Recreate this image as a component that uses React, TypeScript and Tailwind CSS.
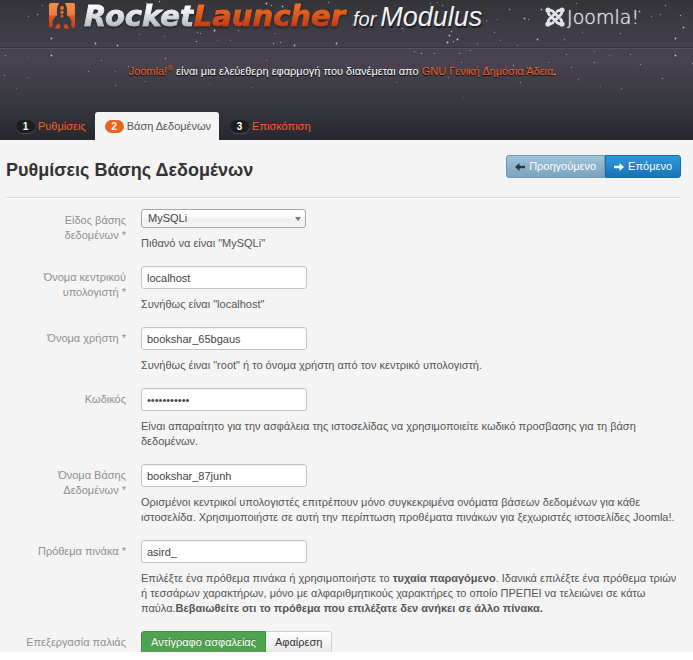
import React from 'react';
import clsx from 'clsx';

const STARS = [
  [28, 16, 0.5], [37, 14, 0.7], [42, 5, 0.5], [51, 38, 0.8], [95, 43, 0.8], [117, 45, 0.8], [139, 34, 0.4], [146, 3, 0.6],
  [164, 36, 0.4], [159, 1, 0.7], [197, 32, 0.6], [200, 33, 0.5], [196, 41, 0.7], [214, 30, 0.9], [217, 40, 0.3], [230, 40, 0.4],
  [238, 30, 0.5], [266, 3, 0.9], [271, 5, 0.7], [282, 6, 0.8], [273, 43, 0.7], [280, 42, 0.6], [275, 33, 0.4], [294, 45, 0.8],
  [328, 2, 0.6], [336, 43, 0.8], [352, 24, 0.4], [402, 28, 0.5], [430, 3, 0.5], [437, 2, 0.4], [442, 5, 0.6], [447, 42, 0.9],
  [449, 35, 0.8], [451, 31, 0.7], [457, 39, 1], [453, 41, 0.7], [477, 43, 0.5], [486, 20, 0.5], [494, 32, 0.5], [497, 19, 0.4],
  [500, 40, 0.4], [509, 9, 0.7], [517, 45, 0.4], [524, 18, 0.8], [528, 19, 0.6], [537, 39, 0.8], [541, 9, 0.8], [564, 39, 0.5],
  [576, 3, 0.5], [582, 32, 0.4], [620, 33, 0.6], [639, 11, 0.8], [651, 16, 0.5], [660, 14, 0.5], [665, 5, 0.6], [675, 38, 0.9],
  [680, 15, 0.7], [683, 27, 0.8], [5, 55, 0.5], [27, 57, 0.3], [51, 55, 0.9], [4, 75, 0.5], [28, 77, 0.4], [88, 71, 0.5],
  [101, 60, 0.5], [115, 71, 0.4], [165, 58, 0.7], [128, 66, 0.5], [115, 85, 0.5], [145, 81, 0.4], [209, 84, 0.3], [266, 60, 0.4],
  [251, 87, 0.3], [414, 51, 0.5], [421, 53, 0.7], [434, 53, 0.5], [459, 53, 0.5], [470, 50, 0.5], [487, 67, 0.5], [461, 62, 0.5],
  [513, 65, 0.6], [520, 82, 0.5], [566, 54, 0.5], [594, 51, 0.3], [571, 67, 0.5], [594, 62, 0.6], [609, 55, 0.3], [630, 54, 0.5],
  [640, 64, 0.5], [675, 55, 0.9], [692, 63, 0.6], [662, 78, 0.5], [621, 88, 0.4], [600, 86, 0.3], [448, 77, 0.4], [396, 82, 0.4],
  [16, 88, 0.3], [463, 97, 0.2], [578, 79, 0.4], [548, 62, 0.4],
];

const STEPS = ['Ρυθμίσεις', 'Βάση Δεδομένων', 'Επισκόπιση'];

function Stars() {
  return (
    <svg className="absolute inset-0 w-full h-full pointer-events-none" aria-hidden="true">
      {STARS.map(([x, y, o], i) => (
        <circle key={i} cx={x + 0.5} cy={y + 0.5} r={o > 0.7 ? 0.9 : 0.7} fill="#d5d8dd" opacity={o} />
      ))}
    </svg>
  );
}

function RocketIcon() {
  return (
    <svg width="28" height="28" viewBox="0 0 28 28" aria-hidden="true">
      <defs>
        <linearGradient id="rocket" x1="0" y1="0" x2="0" y2="1">
          <stop offset="0" stopColor="#f47a1f" />
          <stop offset="0.5" stopColor="#e25d1d" />
          <stop offset="1" stopColor="#c23c18" />
        </linearGradient>
      </defs>
      <path
        fill="url(#rocket)"
        d="M3 1h8C9 4 8.500 8 9.200 13.500 6.500 15 5 17 4.600 20L4.800 24 3 26.500 1 24V3q0-2 2-2zM17 1h8q2 0 2 2v21l-2 2.500L23.200 24l.2-4C23 17 21.500 15 18.800 13.500 19.500 8 19 4 17 1z"
      />
      <path fill="#fff" opacity="0.18" d="M3 1h8C9 4 8.500 8 9 12.500Q5 14 1 13V3q0-2 2-2zM17 1h8q2 0 2 2v10q-4 1-8-.5C19.500 8 19 4 17 1z" />
      <circle cx="14" cy="6" r="1.900" fill="#ef701e" />
      <circle cx="14" cy="10.300" r="1.700" fill="#ef701e" />
      <circle cx="14" cy="14.200" r="1.400" fill="#e25d1d" />
      <path fill="#d24a1b" d="M10 21.500l2.500 2-1 3.500-2-.5-2.500.5 1-3zM18 21.500l-2.500 2 1 3.500 2-.5 2.500.5-1-3z" />
    </svg>
  );
}

function JoomlaIcon() {
  return (
    <svg width="20" height="20" viewBox="0 0 20 20" fill="none" aria-hidden="true">
      <g stroke="#dfe4e6" strokeWidth="2.800" strokeLinecap="round" strokeLinejoin="round">
        <path d="M4.500 8C3 6.500 3 5 3.500 3.500 5 3 6.500 3 8 4.500l5.500 5.500" />
        <path d="M12 4.500C13.500 3 15 3 16.500 3.500 17 5 17 6.500 15.500 8L10 13.500" />
        <path d="M15.500 12C17 13.500 17 15 16.500 16.500 15 17 13.500 17 12 15.500L6.500 10" />
        <path d="M8 15.500C6.500 17 5 17 3.500 16.500 3 15 3 13.500 4.500 12L10 6.500" />
      </g>
      <g fill="#dfe4e6">
        <circle cx="3" cy="3" r="2.600" />
        <circle cx="17" cy="3" r="2.600" />
        <circle cx="3" cy="17" r="2.600" />
        <circle cx="17" cy="17" r="2.600" />
      </g>
    </svg>
  );
}

function Arrow({ flip, color }: { flip?: boolean; color: string }) {
  return (
    <svg width="10" height="8" viewBox="0 0 10 8" className={clsx('shrink-0', flip && 'rotate-180')} aria-hidden="true">
      <path fill={color} d="M5.500 0L10 4 5.500 8V5.300H0V2.700h5.500z" />
    </svg>
  );
}

interface RowProps {
  id: string;
  label: string;
  help?: React.ReactNode;
  children: React.ReactNode;
}

function Row({ id, label, help, children }: RowProps) {
  return (
    <div className="flex gap-[15px] pb-[15px]">
      <label htmlFor={id} className="w-[120px] shrink-0 pt-1 pl-3 text-right text-[#8f8f8f]">
        {label}
      </label>
      <div className="flex-1 min-w-0">
        {children}
        {help && <p className="mt-2">{help}</p>}
      </div>
    </div>
  );
}

function TextBox({ id, value, type = 'text' }: { id: string; value: string; type?: string }) {
  return (
    <input
      id={id}
      type={type}
      defaultValue={value}
      className="block w-[166px] h-[23px] px-[5px] bg-white border border-[#c4c4c4] rounded-[3px] text-[#444] shadow-[inset_0_1px_1px_rgba(0,0,0,0.06)]"
    />
  );
}

export default function App() {
  return (
    <div className="font-['Liberation_Sans',Arial,sans-serif] text-[11px] leading-[15px] text-[#555] bg-white">
      <div className="h-[calc(100vh-8px)] overflow-hidden bg-[#f4f4f4]">
        <header className="relative bg-[linear-gradient(#343438,#46414e_50px,#48434f_62px,#37373e_105px,#27282d)]">
          <Stars />
          <div className="relative h-[49px] pl-12 pr-[54px] flex items-start border-b border-[#57525f] shadow-[inset_0_-1px_0_#37323f]">
            <div className="mt-[2px]">
              <RocketIcon />
            </div>
            <div className="ml-2 flex items-baseline whitespace-nowrap">
              <span className="font-['DejaVu_Sans'] font-bold italic text-[29px] leading-8 drop-shadow-[0_1px_1px_#1b1b1f] [-webkit-text-stroke:1px_transparent]">
                <span className="text-transparent bg-clip-text bg-[linear-gradient(#ffffff_20%,#aeb6ba_85%)]">Rocket</span>
                <span className="text-transparent bg-clip-text bg-[linear-gradient(#f06f1e_20%,#c23c18_80%)] pr-1">Launcher</span>
              </span>
              <span className="ml-1 italic text-[#eef1f3] text-shadow-[1px_2px_1px_#1b1b1f] text-[20px] leading-8">for</span>
              <span className="ml-1 italic text-[#eef1f3] text-shadow-[1px_2px_1px_#1b1b1f] text-[27px] leading-8">Modulus</span>
            </div>
            <div className="ml-auto mt-[7px] flex items-center gap-[2px]">
              <JoomlaIcon />
              <span className="font-['DejaVu_Sans'] font-extralight text-[19px] leading-5 text-[#e2e6e8] text-shadow-[0_0_1px_#d5d9dc]">
                Joomla!
              </span>
            </div>
          </div>
          <p className="relative h-[63px] pt-[15px] pr-2 text-center text-white text-shadow-[0_1px_1px_#000]">
            <a href="#joomla" className="text-[#f2602a]">Joomla!<sup className="text-[8px]">®</sup></a> είναι μια ελεύεθερη
            εφαρμογή που διανέμεται απο <a href="#license" className="text-[#f2602a]">GNU Γενική Δημόσια Άδεια</a>.
          </p>
          <nav className="relative flex gap-px px-[6px]">
            {STEPS.map((step, i) => (
              <a
                key={step}
                href={`#step-${i + 1}`}
                className={clsx(
                  'flex items-center gap-[3px] h-7 pl-[10px] pr-2 rounded-t-[3px]',
                  i === 1 ? 'bg-[#f4f4f4] text-[#555]' : 'text-[#f2602a]'
                )}
              >
                <span
                  className={clsx(
                    'w-[19px] h-[13px] rounded-full text-center text-[10px] leading-[13px] font-bold text-white',
                    i === 1 ? 'bg-[#e8641f]' : 'bg-[#1d1d1f] shadow-[0_1px_0_#4a4a4e]'
                  )}
                >
                  {i + 1}
                </span>
                {step}
              </a>
            ))}
          </nav>
        </header>

        <main className="pl-[6px] pr-3">
          <div className="flex items-start justify-between pt-[15px] pb-3 border-b border-[#dcdcdc] shadow-[0_1px_0_#fff]">
            <h1 className="text-[18px] leading-[30px] font-bold text-[#333]">Ρυθμίσεις Βάσης Δεδομένων</h1>
            <div className="flex h-[23px] text-white text-shadow-[0_-1px_0_rgba(0,0,0,0.25)]">
              <button className="flex items-center gap-1 px-2 rounded-l-[3px] border border-[#7297ae] bg-linear-to-b from-[#9fc4da] to-[#7ba2bd]">
                <Arrow flip color="#333" />
                Προηγούμενο
              </button>
              <button className="flex items-center gap-1 px-2 rounded-r-[3px] border border-[#1a6ba8] bg-linear-to-b from-[#2a9ae0] to-[#1b72b4]">
                <Arrow color="#fff" />
                Επόμενο
              </button>
            </div>
          </div>

          <form className="pt-[11px]">
            <Row id="db-type" label="Είδος βάσης δεδομένων *" help={'Πιθανό να είναι "MySQLi"'}>
              <div className="relative w-[165px]">
                <select
                  id="db-type"
                  className="block appearance-none w-full h-[19px] pl-[6px] rounded-[3px] border border-[#a5a5a5] bg-[linear-gradient(#fff_20%,#f6f6f6_50%,#eee_52%,#f4f4f4)] text-[#444]"
                >
                  <option>MySQLi</option>
                </select>
                <svg width="6" height="4" viewBox="0 0 6 4" className="absolute right-[5px] top-2 pointer-events-none" aria-hidden="true">
                  <path d="M0 0h6L3 4z" fill="#777" />
                </svg>
              </div>
            </Row>
            <Row id="db-host" label="Όνομα κεντρικού υπολογιστή *" help={'Συνήθως είναι "localhost"'}>
              <TextBox id="db-host" value="localhost" />
            </Row>
            <Row id="db-user" label="Όνομα χρήστη *" help={'Συνήθως έιναι "root" ή το όνομα χρήστη από τον κεντρικό υπολογιστή.'}>
              <TextBox id="db-user" value="bookshar_65bgaus" />
            </Row>
            <Row
              id="db-pass"
              label="Κωδικός"
              help="Είναι απαραίτητο για την ασφάλεια της ιστοσελίδας να χρησιμοποιείτε κωδικό προσβασης για τη βάση δεδομένων."
            >
              <TextBox id="db-pass" type="password" value="secretpass1" />
            </Row>
            <Row
              id="db-name"
              label="Όνομα Βάσης Δεδομένων *"
              help="Ορισμένοι κεντρικοί υπολογιστές επιτρέπουν μόνο συγκεκριμένα ονόματα βάσεων δεδομένων για κάθε ιστοσελίδα. Χρησιμοποιήστε σε αυτή την περίπτωση προθέματα πινάκων για ξεχωριστές ιστοσελίδες Joomla!."
            >
              <TextBox id="db-name" value="bookshar_87junh" />
            </Row>
            <Row
              id="db-prefix"
              label="Πρόθεμα πινάκα *"
              help={
                <>
                  Επιλέξτε ένα πρόθεμα πινάκα ή χρησιμοποιήστε το <strong>τυχαία παραγόμενο</strong>. Ιδανικά επιλέξτε ένα πρόθεμα
                  τριών ή τεσσάρων χαρακτήρων, μόνο με αλφαριθμητικούς χαρακτήρες το οποίο ΠΡΕΠΕΙ να τελειώνει σε κάτω παύλα.
                  <strong>Βεβαιωθείτε οτι το πρόθεμα που επιλέξατε δεν ανήκει σε άλλο πίνακα.</strong>
                </>
              }
            >
              <TextBox id="db-prefix" value="asird_" />
            </Row>
            <Row id="db-backup" label="Επεξεργασία παλιάς Βάσης Δεδομένων *">
              <div className="flex h-[23px]">
                <button
                  id="db-backup"
                  type="button"
                  className="px-[9px] rounded-l-[3px] border border-[#3f8f3f] bg-[#4fa34f] text-white text-shadow-[0_-1px_0_rgba(0,0,0,0.25)]"
                >
                  Αντίγραφο ασφαλείας
                </button>
                <button type="button" className="px-[9px] rounded-r-[3px] border border-l-0 border-[#d0d0d0] bg-linear-to-b from-white to-[#e6e6e6] text-[#333]">
                  Αφαίρεση
                </button>
              </div>
            </Row>
          </form>
        </main>
      </div>
    </div>
  );
}
